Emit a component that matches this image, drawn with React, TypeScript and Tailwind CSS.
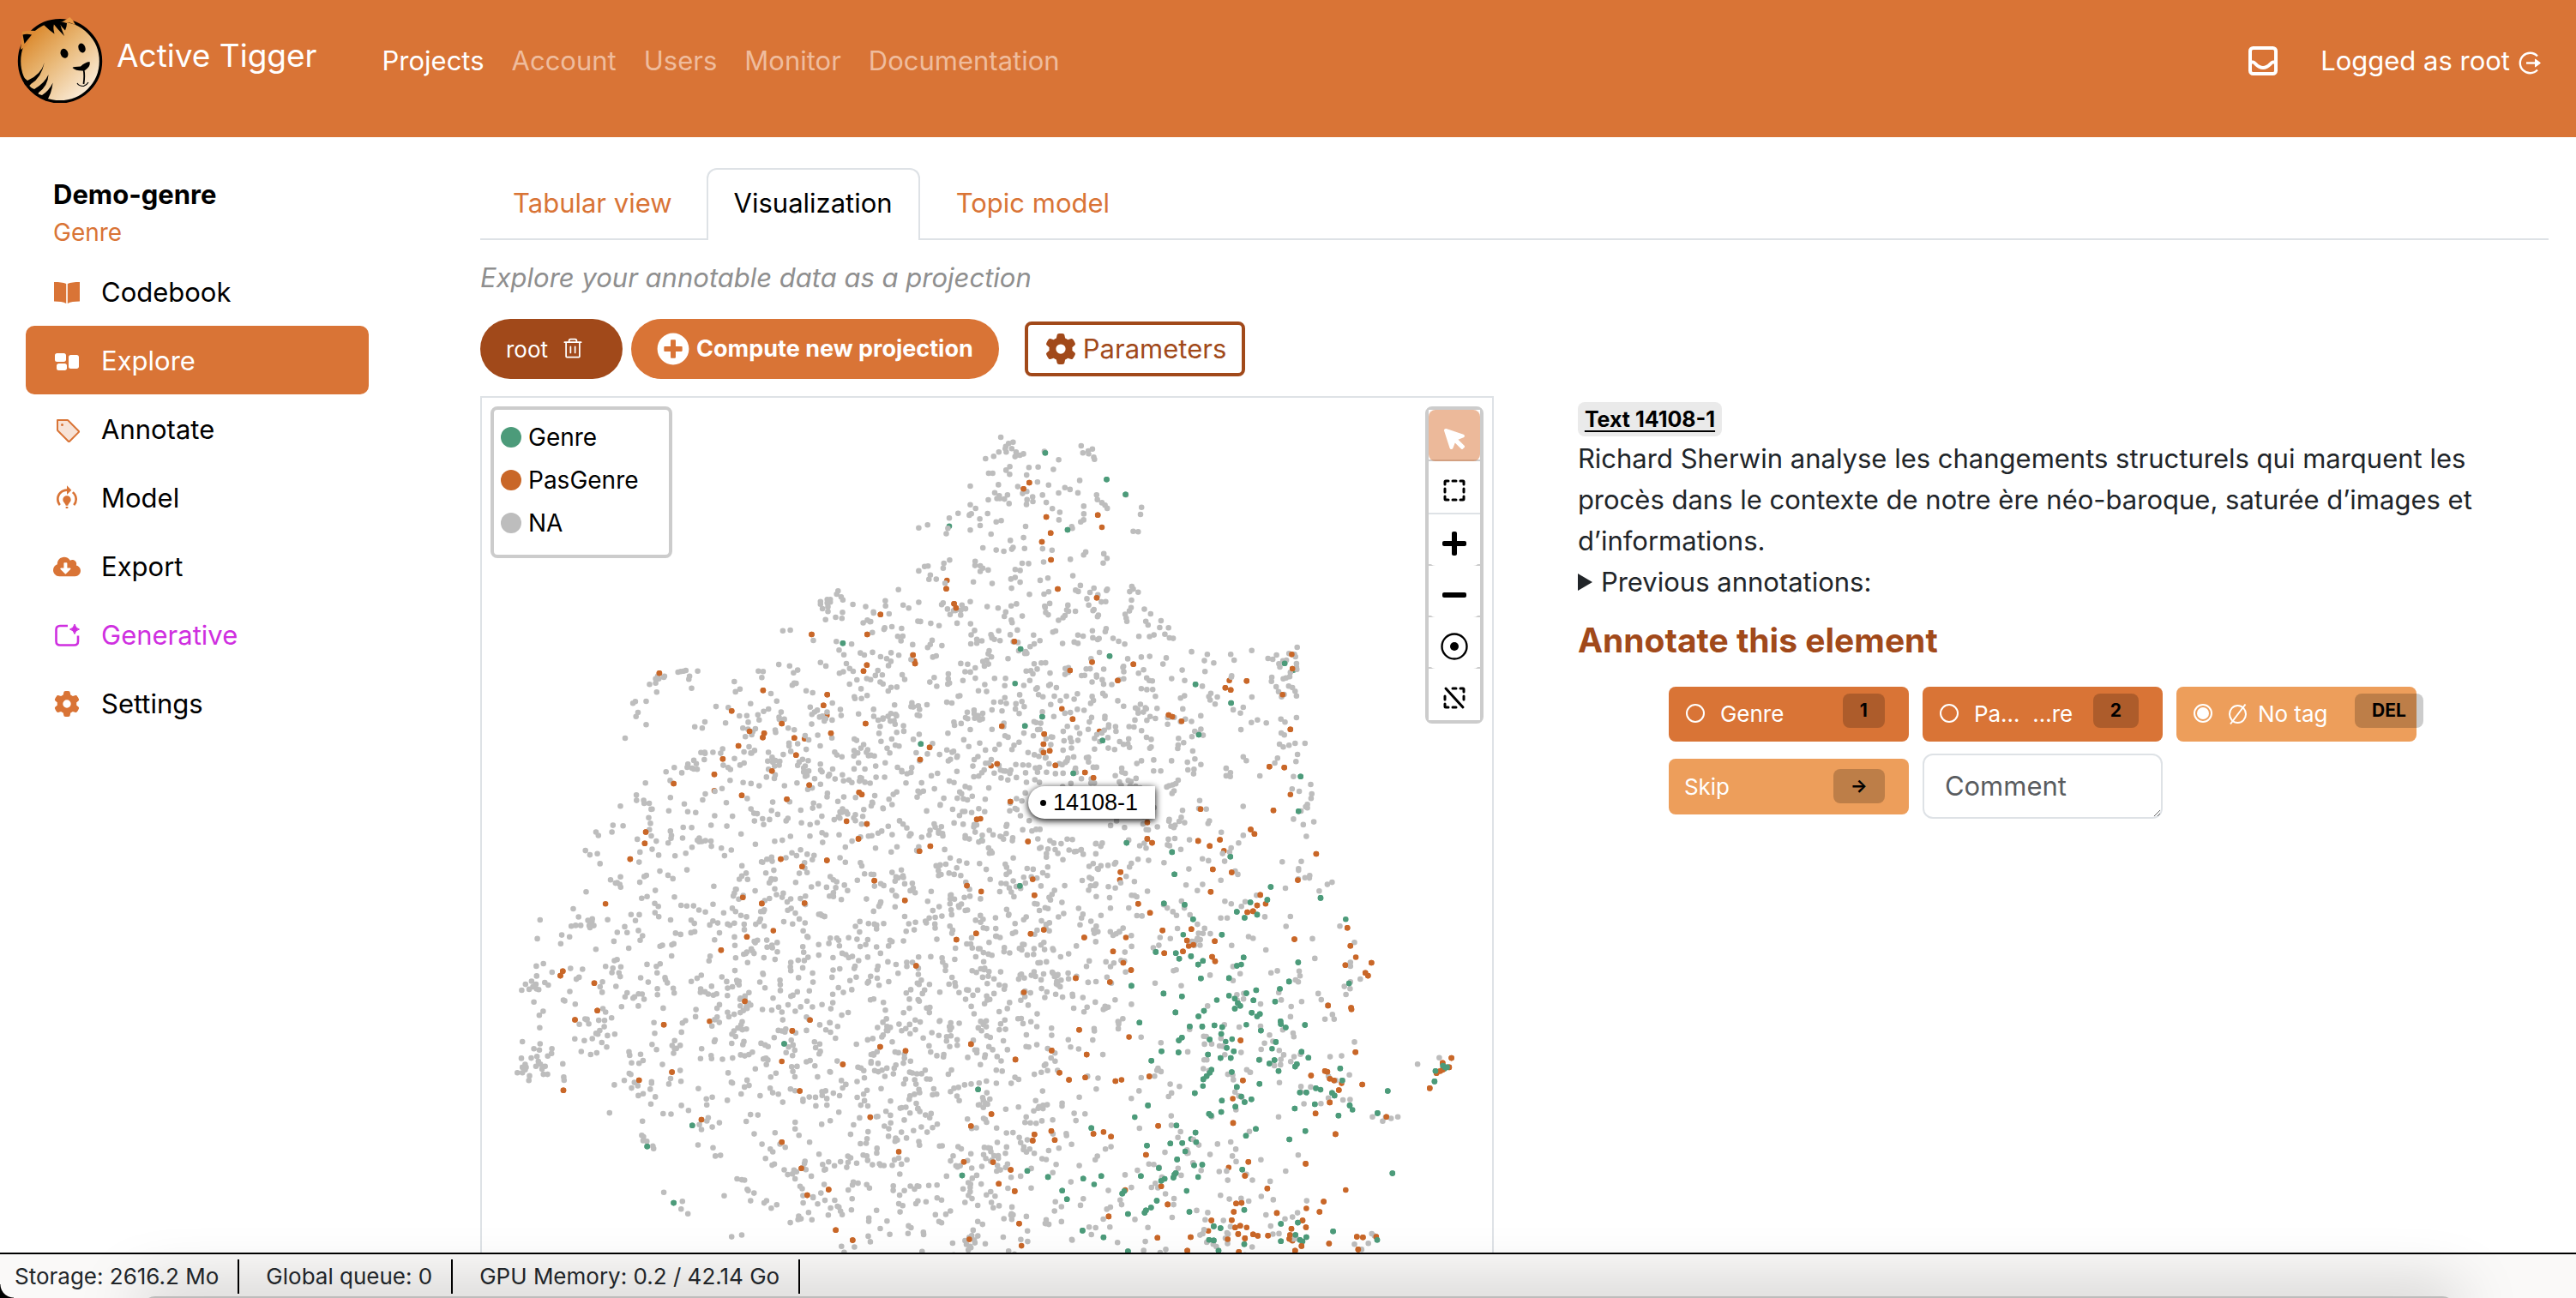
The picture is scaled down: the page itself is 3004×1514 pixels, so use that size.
import React from "react";
import { FaCloudDownloadAlt, FaMinus, FaPlus, FaPlusCircle } from "react-icons/fa";
import { FaGear } from "react-icons/fa6";
import { HiRectangleGroup } from "react-icons/hi2";
import { MdModelTraining } from "react-icons/md";
import { PiCursorFill, PiSelectionBold, PiSelectionSlashBold, PiTagDuotone, PiTrash } from "react-icons/pi";

const COLORS = { genre: "#4c9b7a", pasGenre: "#c96728", na: "#bdbdbd" };

type Point = [number, number];
type Tile = { x: number; y: number; sx: number; sy: number };

/* The projection is stored as four tiles, each with its own origin and scale. */
const TILES: Record<"nw" | "ne" | "sw" | "se", Tile> = {
  nw: { x: -22, y: -14, sx: 2.529, sy: 3 },
  ne: { x: 598, y: -14, sx: 2.529, sy: 3 },
  sw: { x: -22, y: 486, sx: 2.529, sy: 2.781 },
  se: { x: 598, y: 486, sx: 2.529, sy: 2.781 },
};

const place = (t: Tile, pts: number[]): Point[] => {
  const out: Point[] = [];
  for (let i = 0; i < pts.length; i += 2) out.push([t.x + pts[i] / t.sx, t.y + pts[i + 1] / t.sy]);
  return out;
};

const PAS_GENRE: Point[] = [
  ...place(TILES.nw, [
    1427, 681, 1425, 710, 1448, 763, 1454, 778, 1231, 800, 1028, 870, 1192, 870, 1327, 942, 1331, 963, 1333, 972,
    1191, 977, 1181, 998, 579, 1006, 885, 1066, 1074, 1081, 1063, 1118, 1073, 1153, 792, 1138, 940, 1182, 1187, 1182,
    845, 1209, 888, 1216, 884, 1231, 977, 1232, 1007, 1235, 1085, 1216, 812, 1260, 982, 1292, 766, 1306, 911, 1348,
    741, 1360, 621, 1392, 741, 1417, 1021, 1397, 822, 1433, 955, 1447, 1168, 1423, 1176, 1430, 1376, 1265, 1348, 1308,
    1557, 1330,
  ]),
  ...place(TILES.ne, [
    102, 339, 85, 361, 152, 459, 165, 515, 139, 546, 166, 609, 304, 452, 316, 495, 186, 711, 301, 742, 58, 895,
    287, 967, 409, 974, 222, 996, 363, 1031, 198, 1130, 230, 1166, 21, 1191, 146, 1219, 144, 1254, 144, 1283,
    162, 1277, 179, 1328, 309, 1209, 266, 1353, 291, 1372, 7, 1323, 46, 1455, 513, 1152, 524, 1158, 551, 1174,
    692, 1031, 743, 1033, 680, 1057, 696, 1064, 849, 1081, 872, 1202, 810, 1333, 854, 1336, 872, 1430, 822, 1486,
    607, 1481, 876, 940, 878, 990,
  ]),
  ...place(TILES.sw, [
    539, 57, 536, 94, 493, 145, 420, 290, 294, 508, 287, 523, 387, 547, 396, 636, 330, 666, 296, 895, 592, 682,
    727, 671, 616, 836, 519, 862, 703, 990, 761, 440, 837, 397, 825, 269, 881, 289, 915, 377, 937, 145, 1000, 169,
    1073, 149, 1007, 288, 831, 606, 1023, 667, 971, 702, 940, 801, 993, 897, 940, 1063, 998, 1148, 1015, 1235,
    1078, 1217, 1149, 1381, 1099, 1348, 1131, 22, 1191, 31, 1166, 79, 1213, 215, 1303, 279, 1346, 119, 1378, 103,
    1486, 231, 1528, 250, 1513, 386, 1455, 406, 1336, 491, 1230, 754, 1305, 767, 1120, 811, 1201, 982, 1285, 1094,
    1498, 745, 1558, 972, 1498, 1011, 1477, 1127, 1563, 1128, 1493, 1378, 1515, 16, 1526, 14,
  ]),
  ...place(TILES.se, [
    98, 88, 450, 26, 450, 79, 464, 92, 600, 86, 634, 102, 664, 82, 676, 118, 755, 49, 766, 63, 948, 128, 699, 188,
    643, 178, 637, 251, 371, 187, 369, 212, 112, 210, 117, 262, 423, 290, 458, 319, 495, 376, 580, 372, 567, 409,
    572, 427, 586, 423, 555, 444, 500, 450, 649, 411, 641, 462, 650, 476, 783, 261, 799, 290, 774, 295, 762, 314,
    745, 317, 894, 213, 884, 405, 1040, 368, 1049, 426, 1065, 463, 1034, 489, 1111, 481, 1093, 514, 1101, 523,
    145, 374, 106, 387, 264, 399, 387, 399, 349, 444, 379, 481, 402, 505, 239, 531, 340, 544, 86, 577, 249, 699,
    396, 722, 168, 766, 271, 779, 61, 795, 191, 838, 219, 861, 267, 853, 356, 865, 374, 861, 456, 850, 725, 733,
    983, 620, 1051, 627, 1052, 632, 1064, 771, 732, 863, 702, 922, 703, 1001, 482, 1010, 117, 1038, 112, 1058,
    167, 1027, 177, 1056, 291, 1036, 321, 1030, 343, 1045, 446, 1104, 933, 847, 974, 832, 981, 835, 988, 857,
    1001, 863, 1023, 872, 1015, 894, 1084, 876, 988, 934, 946, 970, 1005, 1037, 917, 1133, 1155, 981, 1035, 1218,
    1347, 790, 1321, 806, 1340, 820, 1303, 839, 1314, 832, 1321, 828, 1283, 888, 690, 1145, 748, 1127, 738, 1172,
    804, 1213, 47, 1153, 12, 1198, 59, 1222, 72, 1327, 79, 1399, 336, 1304, 491, 1206, 510, 1265, 480, 1373,
    578, 1371, 568, 1415, 639, 1317, 630, 1351, 687, 1378, 728, 1260, 712, 1262, 705, 1289, 699, 1316, 709, 1340,
    724, 1334, 743, 1340, 718, 1361, 738, 1375, 762, 1362, 776, 1367, 806, 1366, 720, 1419, 832, 1293, 919, 1278,
    970, 1256, 958, 1289, 908, 1317, 918, 1339, 875, 1344, 871, 1364, 869, 1377, 878, 1383, 886, 1415, 986, 1392,
    1068, 1370, 1086, 1372, 1072, 1411, 1125, 1370, 905, 1400, 385, 1218,
  ]),
];

const GENRE: Point[] = [
  ...place(TILES.nw, [1434, 491, 1120, 901, 1350, 1253]),
  ...place(TILES.ne, [
    149, 235, 330, 328, 386, 380, 215, 504, 76, 921, 339, 946, 60, 1042, 140, 1158, 89, 1190, 318, 1241, 232, 1356,
    592, 1045, 697, 1110, 602, 1221, 855, 971, 881, 995, 902, 1367, 896, 1489,
  ]),
  ...place(TILES.sw, [947, 744, 676, 1009, 543, 1077, 621, 1260, 1519, 892, 1472, 1171, 1530, 85]),
  ...place(TILES.se, [
    389, 92, 523, 122, 695, 137, 530, 194, 74, 232, 499, 289, 560, 293, 585, 340, 556, 390, 670, 390, 534, 450,
    475, 446, 544, 468, 579, 460, 614, 475, 600, 487, 734, 464, 727, 487, 714, 491, 814, 235, 804, 277, 754, 285,
    714, 316, 737, 335, 774, 325, 961, 271, 1035, 340, 895, 480, 868, 542, 841, 566, 608, 532, 691, 531, 771, 570,
    742, 580, 763, 603, 691, 588, 708, 597, 717, 612, 724, 621, 708, 630, 827, 607, 758, 643, 782, 647, 774, 655,
    742, 682, 785, 701, 843, 671, 844, 680, 858, 691, 915, 683, 403, 556, 498, 581, 552, 590, 655, 602, 533, 642,
    617, 637, 601, 655, 575, 688, 612, 688, 648, 684, 671, 690, 668, 712, 700, 729, 634, 730, 543, 733, 552, 724,
    492, 768, 542, 772, 462, 799, 629, 779, 427, 675, 681, 737, 684, 757, 705, 768, 666, 790, 696, 790, 639, 828,
    634, 838, 625, 849, 615, 859, 614, 881, 590, 904, 699, 836, 714, 884, 781, 874, 780, 796, 825, 797, 810, 808,
    837, 832, 818, 760, 829, 738, 905, 770, 925, 789, 886, 818, 891, 810, 1019, 824, 1045, 548, 947, 888, 961, 893,
    900, 902, 919, 902, 995, 903, 1002, 912, 944, 940, 885, 954, 1014, 977, 1047, 944, 1055, 958, 1129, 969,
    1159, 897, 1025, 863, 1297, 866, 1300, 832, 1322, 815, 1328, 820, 1334, 820, 1326, 825, 670, 928, 727, 915,
    737, 933, 757, 924, 710, 948, 668, 965, 632, 971, 638, 977, 413, 982, 452, 944, 536, 1009, 770, 1020, 741, 1042,
    916, 1027, 869, 1054, 285, 1017, 592, 1032, 579, 1053, 594, 1063, 553, 1066, 518, 1067, 562, 1093, 538, 1119,
    449, 1074, 588, 1138, 612, 1136, 600, 1176, 730, 1152, 484, 1147, 530, 1168, 534, 1163, 527, 1178, 501, 1182,
    491, 1188, 431, 1173, 566, 1221, 478, 1253, 461, 1275, 446, 1284, 442, 1292, 393, 1296, 574, 1289, 314, 1173,
    261, 1181, 293, 1200, 157, 1176, 96, 1156, 199, 1220, 213, 1248, 259, 1350, 321, 1372, 393, 1417, 376, 1230,
    382, 1222, 1173, 1164, 998, 1352, 894, 1324, 844, 1328, 844, 1384, 887, 1364, 919, 1371, 900, 1380, 908, 1385,
    736, 1283, 646, 1336, 666, 1342, 632, 1380, 646, 1382, 736, 1394, 660, 1415, 1128, 1380,
  ]),
];

/* Isolated texts and small clusters around the main cloud. */
const NA_OUTLIERS: Point[] = [
  ...place(TILES.nw, [
    1541, 255, 1565, 247, 1550, 306, 1562, 306, 1496, 351, 1549, 399, 1496, 416, 1460, 446, 1434, 463, 1430, 499,
    1493, 453, 1499, 448, 1524, 466, 1525, 489, 1547, 447, 1344, 497, 1370, 487, 1496, 505, 1557, 519, 1533, 567,
    1435, 610, 1418, 621, 1416, 638, 1378, 662, 1374, 677, 1284, 713, 1106, 718, 1102, 729, 1115, 739, 1120, 749,
    1054, 755, 1054, 764, 1074, 748, 1083, 748, 1074, 760, 1083, 757, 1060, 780, 1076, 773, 1076, 790, 1069, 818,
    1119, 793, 943, 857, 965, 855, 1033, 891, 1101, 895, 1109, 925, 1054, 968, 1110, 1006, 871, 998, 885, 1000,
    881, 1021, 800, 1035, 692, 998, 657, 996, 651, 998, 642, 1000, 634, 1002, 668, 1016, 666, 1027, 674, 1058,
    594, 1016, 592, 1020, 574, 1016, 568, 1025, 577, 1025, 568, 1040, 550, 1045, 571, 1072, 508, 1105, 501, 1111,
    540, 1104, 516, 1143, 510, 1157, 540, 1186, 478, 1233, 464, 1471, 538, 1390, 511, 1432, 623, 1336, 661, 1335,
    688, 1322, 971, 1048, 908, 1077, 925, 1103, 848, 1112,
  ]),
  ...place(TILES.ne, [
    18, 180, 54, 197, 41, 202, 31, 220, 50, 220, 34, 232, 63, 232, 74, 243, 255, 210, 260, 235, 276, 228, 277, 238,
    288, 221, 292, 250, 294, 257, 433, 425, 430, 450, 423, 511, 387, 382, 320, 620, 892, 915, 758, 926, 696, 940,
    627, 940, 646, 970, 620, 1000, 806, 954, 820, 957, 831, 942, 868, 937, 884, 940, 887, 948, 850, 962, 860, 960,
    838, 973, 841, 984, 890, 972, 890, 985, 891, 992, 872, 1003, 870, 1018, 859, 1022, 851, 1025, 817, 1020,
    816, 1034, 867, 1051, 878, 1056, 886, 1069, 890, 1085, 846, 1088, 733, 1125, 650, 1114, 757, 1178, 775, 1169,
    801, 1180, 844, 1166, 856, 1177, 890, 1161, 845, 1215, 854, 1222, 840, 1254, 851, 1264, 868, 1258, 886, 1251,
    915, 1251, 893, 1290, 834, 1303, 826, 1320, 733, 1298, 782, 1365, 881, 1367, 932, 1395, 935, 1428, 933, 1444,
    898, 1419, 877, 1411, 922, 1465, 917, 1473, 922, 1477, 903, 1488,
  ]),
  ...place(TILES.sw, [
    361, 117, 374, 131, 396, 127, 392, 57, 399, 68, 442, 35, 472, 37, 439, 57, 363, 251, 325, 306, 227, 342, 219, 403,
    332, 360, 347, 360, 372, 361, 381, 339, 291, 391, 314, 397, 288, 419, 216, 492, 237, 484, 173, 570, 184, 551,
    202, 541, 195, 567, 206, 559, 215, 551, 217, 566, 223, 568, 241, 545, 217, 524, 175, 737, 227, 744, 209, 760,
    225, 764, 172, 791, 201, 790, 218, 785, 183, 811, 175, 820, 186, 820, 160, 838, 175, 838, 183, 828, 196, 848,
    194, 863, 222, 801, 228, 810, 215, 817, 242, 817, 233, 826, 237, 843, 249, 843, 262, 760, 261, 775, 297, 852,
    298, 862, 294, 809, 432, 968, 529, 995, 527, 1041, 532, 1046, 531, 1058, 542, 1060, 560, 1076, 562, 1084,
    693, 1072, 744, 1108, 592, 1226, 647, 1255, 643, 1280, 663, 1295, 770, 1237, 792, 1370, 822, 1364, 808, 1182,
    822, 1185, 830, 1186, 838, 1216, 841, 1220, 858, 1228, 848, 1253, 895, 1253, 888, 1260, 909, 1277, 925, 1266,
    644, 944, 665, 960, 735, 917, 694, 889, 567, 916, 531, 906, 517, 912, 552, 891, 703, 1022, 697, 1006, 719, 994,
    723, 984, 735, 1014, 756, 1000, 965, 1324, 988, 1314, 1019, 1291, 1116, 1401,
  ]),
  ...place(TILES.se, [
    904, 152, 896, 176, 896, 181, 895, 209, 915, 205, 929, 198, 928, 206, 995, 220, 981, 227, 957, 248, 919, 71,
    941, 24, 910, 33, 881, 15, 872, 331, 859, 363, 937, 403, 1018, 362, 1061, 415, 1049, 480, 1049, 492, 944, 467,
    1078, 534, 1049, 543, 1031, 558, 1048, 565, 1036, 584, 954, 581, 963, 601, 982, 620, 996, 649, 974, 664,
    1001, 664, 1061, 738, 1023, 783, 989, 786, 1046, 845, 1311, 789, 1247, 810, 984, 849, 1006, 863, 1026, 863,
    903, 882, 932, 884, 962, 938, 984, 920, 1027, 926, 1048, 925, 1114, 981, 1144, 995, 1153, 982, 1169, 986,
    1189, 981, 837, 981, 895, 1105, 858, 1157, 785, 1120, 760, 1186, 786, 1239, 920, 1253, 800, 1299, 893, 1292,
    878, 1306, 856, 1312, 1061, 1394, 1082, 1411, 1102, 1391, 1112, 1360, 1120, 1367, 712, 1126, 635, 1103,
    657, 1069,
  ]),
];

/* Untagged texts per 60px cell of the plot, rows from top to bottom. */
const NA_DENSITY: number[][] = [
  [0, 0, 0, 0, 0, 0, 0, 0, 0, 0, 0, 0, 0, 0, 0, 0, 0, 0],
  [0, 0, 0, 0, 0, 0, 0, 0, 0, 0, 22, 9, 0, 0, 0, 0, 0, 0],
  [0, 0, 0, 0, 0, 0, 0, 0, 0, 3, 13, 10, 4, 0, 0, 0, 0, 0],
  [0, 0, 0, 0, 0, 0, 0, 0, 5, 9, 12, 12, 9, 0, 0, 0, 0, 0],
  [0, 0, 0, 0, 0, 0, 2, 18, 14, 23, 21, 21, 15, 8, 0, 0, 0, 0],
  [0, 0, 0, 0, 1, 2, 8, 21, 13, 21, 20, 23, 20, 9, 9, 3, 0, 0],
  [0, 0, 0, 0, 9, 28, 22, 22, 20, 25, 22, 24, 28, 20, 4, 0, 0, 0],
  [0, 0, 0, 10, 16, 18, 25, 25, 19, 25, 24, 24, 22, 18, 7, 1, 0, 0],
  [0, 0, 0, 17, 15, 18, 20, 17, 20, 23, 20, 19, 14, 16, 9, 0, 0, 0],
  [0, 0, 6, 15, 11, 23, 20, 18, 20, 22, 25, 18, 15, 8, 8, 3, 0, 0],
  [0, 2, 15, 12, 16, 24, 22, 22, 19, 24, 27, 18, 14, 14, 7, 2, 0, 0],
  [0, 11, 15, 16, 22, 24, 20, 17, 20, 26, 23, 22, 9, 4, 8, 10, 0, 0],
  [0, 6, 19, 15, 17, 24, 24, 19, 22, 26, 18, 11, 6, 3, 12, 16, 0, 0],
  [0, 0, 5, 9, 5, 14, 20, 22, 26, 20, 14, 9, 3, 8, 12, 3, 0, 0],
  [0, 0, 0, 0, 2, 10, 14, 21, 19, 21, 26, 10, 4, 12, 4, 0, 0, 0],
  [0, 0, 0, 0, 0, 2, 22, 12, 16, 18, 14, 6, 9, 10, 10, 2, 0, 0],
  [0, 0, 0, 0, 0, 0, 0, 10, 12, 20, 8, 8, 6, 8, 16, 16, 0, 0],
];

const CLOUD_EDGE: Point[] = [
  [590, 40], [655, 48], [672, 66], [745, 115], [768, 160], [728, 185], [762, 220], [790, 240], [808, 282],
  [860, 301], [920, 290], [955, 290], [952, 436], [965, 456], [970, 520], [980, 556], [1000, 606], [1015, 640],
  [1024, 700], [1024, 760], [1040, 800], [1060, 836], [1000, 846], [968, 886], [968, 930], [1020, 970], [1030, 1030],
  [320, 1030], [330, 900], [250, 880], [200, 835], [145, 800], [60, 790], [60, 700], [100, 610], [130, 530],
  [160, 470], [175, 440], [220, 400], [270, 360], [300, 320], [330, 290], [400, 260], [430, 200], [520, 190],
  [560, 130], [580, 70],
];

const isInside = (x: number, y: number) => {
  let inside = false;
  for (let i = 0, j = CLOUD_EDGE.length - 1; i < CLOUD_EDGE.length; j = i++) {
    const [xi, yi] = CLOUD_EDGE[i];
    const [xj, yj] = CLOUD_EDGE[j];
    if (yi > y !== yj > y && x < ((xj - xi) * (y - yi)) / (yj - yi) + xi) inside = !inside;
  }
  return inside;
};

const makeCloud = (): Point[] => {
  let seed = 14108;
  const rand = () => {
    seed = (seed * 1664525 + 1013904223) % 4294967296;
    return seed / 4294967296;
  };
  const out: Point[] = [];
  NA_DENSITY.forEach((row, r) =>
    row.forEach((cell, c) => {
      const count = Math.round(cell * 1.12);
      let last: Point | null = null;
      for (let n = 0, tries = 0; n < count && tries < count * 8; tries++) {
        const near = last && rand() < 0.15;
        const x = near && last ? last[0] + (rand() - 0.5) * 18 : c * 60 + rand() * 60;
        const y = near && last ? last[1] + (rand() - 0.5) * 18 : r * 60 + rand() * 60;
        if (!isInside(x, y)) continue;
        last = [x, y];
        out.push(last);
        n++;
      }
    })
  );
  return out;
};

const NA_POINTS = [...makeCloud(), ...NA_OUTLIERS];

const dots = (pts: Point[]) => pts.map(([x, y]) => `M${x.toFixed(1)} ${y.toFixed(1)}h0`).join("");

function Scatter() {
  return (
    <svg className="absolute top-0 left-0" width="1180" height="1200" fill="none" strokeWidth="6.6" strokeLinecap="round" role="img" aria-label="Projection">
      <path d={dots(PAS_GENRE)} stroke={COLORS.pasGenre} />
      <path d={dots(GENRE)} stroke={COLORS.genre} />
      <path d={dots(NA_POINTS)} stroke={COLORS.na} />
      <path d={dots(PAS_GENRE.filter((_, i) => i % 8 !== 0))} stroke={COLORS.pasGenre} />
      <path d={dots(GENRE.filter((_, i) => i % 9 !== 0))} stroke={COLORS.genre} />
    </svg>
  );
}

function Logo() {
  return (
    <svg width="100" height="100" viewBox="0 0 100 100" aria-hidden="true">
      <defs>
        <linearGradient id="fur" x1="0.1" y1="0.1" x2="0.85" y2="0.9">
          <stop offset="0" stopColor="#d98324" />
          <stop offset="0.45" stopColor="#e8b673" />
          <stop offset="1" stopColor="#fbeedd" />
        </linearGradient>
      </defs>
      <circle cx="50" cy="51.3" r="47.5" fill="url(#fur)" stroke="#000" strokeWidth="3.4" />
      <path d="M6 17 Q13 15 22 16 L10 34 L4 38 Z" fill="#dc8a35" />
      <path d="M6.500 20.500 Q11 19 17 20.500 L8.500 31 Z" />
      <path d="M51.500 6 Q57 3 61.500 0 Q65 3 68 9 Q60 5 51.500 6 Z" fill="#ec9a45" />
      <path d="M31 9 Q38 5 44 5 Q41 11 43.500 19.500 Q37 15 31 9 Z M40 5 L49.500 5 Q51 13 55 22 Q47 14 40 5 Z M48 4.500 L58 7 Q58 11 56 15.500 Q51 11 48 4.500 Z" />
      <ellipse cx="55" cy="42.300" rx="4.300" ry="5.600" transform="rotate(-20 55 42.300)" />
      <ellipse cx="75.500" cy="36" rx="4" ry="5.600" transform="rotate(-20 75.500 36)" />
      <path d="M64.500 59 Q66 57.500 74 57.500 Q79 52.500 84.500 52 Q85.500 56 82.500 59 Q79 63 76 62.500 Q68 62.500 64.500 59 Z" />
      <path d="M77.500 61 Q79 68 77.500 78" fill="none" stroke="#000" strokeWidth="1.800" />
      <path d="M70 77 Q72 80.500 77.500 80.500 Q81 79.500 83 76" fill="none" stroke="#000" strokeWidth="1.200" />
      <path d="M31.800 53 Q28 67 12 74 L5 68 L9 79 Q14 82 16 78 Q28 71 31.800 53 Z" />
      <path d="M36.500 67 Q32 77 20 84 L11 80 L24 92 L25 88 Q36 80 36.500 67 Z" />
      <path d="M41.600 76.500 Q37 86 29 91 L18 88 L34 98 Q40 90 41.600 76.500 Z" />
    </svg>
  );
}

function InboxIcon() {
  return (
    <svg width="34" height="34" viewBox="0 0 34 34" fill="none" stroke="currentColor" strokeWidth="4" aria-hidden="true">
      <rect x="2" y="2" width="30" height="30" rx="3.500" />
      <path d="M2 18.500h3.500c2.500 0 4.500 6.500 11.500 6.500s9-6.500 11.500-6.500H32" />
    </svg>
  );
}

function LogoutIcon() {
  return (
    <svg width="27" height="27" viewBox="0 0 27 27" fill="none" stroke="currentColor" strokeWidth="2.400" aria-hidden="true">
      <path d="M22 5.500A11.700 11.700 0 1 0 22 21.500" />
      <path d="M9 13.500h12" />
      <path d="M19.500 9l6 4.500-6 4.500Z" fill="currentColor" strokeWidth="1" />
    </svg>
  );
}

function BookIcon() {
  return (
    <svg width="32" height="32" viewBox="0 0 32 32" fill="currentColor" aria-hidden="true">
      <path d="M1 4c6 0 11 .4 14.200 2v23C12 27.200 7 26.500 1 26.500ZM31 4c-6 0-11 .4-14.200 2v23c3.200-1.800 8.200-2.500 14.200-2.500Z" />
    </svg>
  );
}

function GenerateIcon() {
  return (
    <svg width="32" height="32" viewBox="0 0 32 32" fill="none" stroke="currentColor" strokeWidth="2.600" aria-hidden="true">
      <path d="M17 5H8Q3.500 5 3.500 9.500V23Q3.500 27.500 8 27.500H24.500Q29 27.500 29 23V16.500" />
      <path d="M25 3q1 5 5.500 6-4.500 1-5.500 5.500-1-4.500-5.500-5.500 4.500-1 5.500-6Z" fill="currentColor" strokeWidth="1" />
    </svg>
  );
}

function TargetIcon() {
  return (
    <svg width="32" height="32" viewBox="0 0 32 32" aria-hidden="true">
      <circle cx="16" cy="16" r="14.500" fill="none" stroke="currentColor" strokeWidth="2.400" />
      <circle cx="16" cy="16" r="5" fill="currentColor" />
    </svg>
  );
}

function EmptySetIcon() {
  return (
    <svg width="23" height="26" viewBox="0 0 23 26" fill="none" stroke="currentColor" strokeWidth="2" aria-hidden="true">
      <ellipse cx="11.500" cy="13" rx="9.500" ry="10" />
      <path d="M3 24.500 20.500 1.500" />
    </svg>
  );
}

const NAV = ["Projects", "Account", "Users", "Monitor", "Documentation"];

const MENU: { label: string; icon: React.ReactNode; kind?: "active" | "generative" }[] = [
  { label: "Codebook", icon: <BookIcon /> },
  { label: "Explore", icon: <HiRectangleGroup />, kind: "active" },
  { label: "Annotate", icon: <PiTagDuotone /> },
  { label: "Model", icon: <MdModelTraining /> },
  { label: "Export", icon: <FaCloudDownloadAlt /> },
  { label: "Generative", icon: <GenerateIcon />, kind: "generative" },
  { label: "Settings", icon: <FaGear className="p-px" /> },
];

const LEGEND = [
  { label: "Genre", dot: "bg-[#4c9b7a]" },
  { label: "PasGenre", dot: "bg-[#c96728]" },
  { label: "NA", dot: "bg-[#bdbdbd]" },
];

const TOOLS = [
  { label: "Select", icon: <PiCursorFill className="size-8" />, row: "h-[60px]", button: "rounded-lg bg-[#d97436]/50 text-white" },
  { label: "Marquee", icon: <PiSelectionBold className="size-8" />, row: "h-[62px]", button: "border-b-2 border-[#dee2e6] bg-white" },
  { label: "Zoom in", icon: <FaPlus className="size-8" />, row: "h-[60px]", button: "rounded-b-lg bg-white" },
  { label: "Zoom out", icon: <FaMinus className="size-8" />, row: "h-[60px]", button: "rounded-b-lg bg-white" },
  { label: "Reset view", icon: <TargetIcon />, row: "h-[60px]", button: "rounded-b-lg bg-white" },
  { label: "Clear selection", icon: <PiSelectionSlashBold className="size-8" />, row: "h-[60px]", button: "bg-white" },
];

function Header() {
  return (
    <header className="flex h-40 shrink-0 items-start bg-[#d97436] pt-5 pr-10 pl-5 text-white">
      <a href="#home" className="flex items-start">
        <Logo />
        <span className="ml-4 pt-[15px] text-[37px] leading-[60px]">Active Tigger</span>
      </a>
      <nav className="ml-[76px] flex gap-8 pt-[27px] text-[31px] leading-[48px]">
        {NAV.map((item, i) => (
          <a key={item} href={`#${item.toLowerCase()}`} className={i === 0 ? "" : "text-[#efbc9d]"}>
            {item}
          </a>
        ))}
      </nav>
      <div className="ml-auto flex items-center pt-[27px] text-[31px] leading-[48px]">
        <button type="button" aria-label="Inbox" className="mr-[50px]">
          <InboxIcon />
        </button>
        <span>Logged as root</span>
        <button type="button" aria-label="Log out" className="mt-1 ml-2.5">
          <LogoutIcon />
        </button>
      </div>
    </header>
  );
}

function Sidebar() {
  return (
    <aside className="w-[560px] shrink-0 pt-11 pr-[130px] pl-[30px]">
      <div className="pl-8 text-[31px] leading-[46px] font-bold text-black">Demo-genre</div>
      <a href="#genre" className="block pl-8 text-[28px] leading-[42px] text-[#d97436]">Genre</a>
      <ul className="mt-2">
        {MENU.map(({ label, icon, kind }) => (
          <li key={label}>
            <a
              href={`#${label.toLowerCase()}`}
              className={
                "flex h-20 items-center rounded-[10px] pt-0.5 pl-8 text-[31px] " +
                (kind === "active" ? "bg-[#d97436] text-white" : kind === "generative" ? "text-[#cf2fe0]" : "text-black")
              }
            >
              <span className={"w-14 text-[32px] " + (kind ? "" : "text-[#d97436]")}>{icon}</span>
              {label}
            </a>
          </li>
        ))}
      </ul>
    </aside>
  );
}

function Tabs() {
  return (
    <div role="tablist" className="flex gap-2 border-b-2 border-[#dee2e6] pl-1.5 text-[31px] leading-[48px]">
      <button type="button" role="tab" className="px-8 py-[17px] text-[#d97436]">Tabular view</button>
      <button type="button" role="tab" aria-selected="true" className="-mb-0.5 rounded-t-xl border-2 border-b-0 border-[#dee2e6] bg-white px-[30px] pt-[15px] pb-[19px] text-black">
        Visualization
      </button>
      <button type="button" role="tab" className="px-[34px] py-[17px] text-[#d97436]">Topic model</button>
    </div>
  );
}

function Plot() {
  return (
    <section className="relative min-h-0 overflow-hidden border-2 border-b-0 border-[#dee2e6] text-black">
      <Scatter />
      <ul className="absolute top-2.5 left-2.5 w-[212px] rounded-lg border-4 border-[#ccc] bg-white px-2 pt-[7px] pb-3 text-[28px] leading-[50px]">
        {LEGEND.map(({ label, dot }) => (
          <li key={label} className="flex items-center gap-2">
            <span className={"size-6 rounded-full " + dot} />
            {label}
          </li>
        ))}
      </ul>
      <ul className="absolute top-2.5 right-2.5 w-[68px] rounded-lg border-4 border-[#ccc] bg-white">
        {TOOLS.map(({ label, icon, row, button }) => (
          <li key={label} className={"bg-[linear-gradient(to_top,#ccc_2px,white_2px)] " + row}>
            <button type="button" aria-label={label} className={"flex size-full items-center justify-center pt-2 " + button}>
              {icon}
            </button>
          </li>
        ))}
      </ul>
      <div className="absolute top-[453px] left-[637px] flex h-[38px] items-center gap-2 rounded-l-full bg-white pr-5 pl-3.5 font-['Liberation_Sans',sans-serif] text-[27px] shadow-[0_2px_8px_#000]">
        <span className="size-[7px] rounded-full bg-black" />
        14108-1
      </div>
    </section>
  );
}

function Key({ children }: { children: React.ReactNode }) {
  return (
    <kbd className="ml-auto flex h-10 shrink-0 items-center rounded-lg bg-black/20 px-5 font-[Inter,sans-serif] text-[21px] font-bold text-black">
      {children}
    </kbd>
  );
}

function TagOption({ label, hotkey, checked = false, wide = false }: { label: React.ReactNode; hotkey: string; checked?: boolean; wide?: boolean }) {
  return (
    <label className={"flex h-16 w-[280px] rounded-lg pt-2 pl-5 " + (checked ? "bg-[#ed9e5b]" : "bg-[#d97436]") + (wide ? "" : " pr-7")}>
      <input
        type="radio"
        name="tag"
        defaultChecked={checked}
        className="mt-3 mr-[18px] size-[22px] shrink-0 appearance-none rounded-full border-2 border-white bg-clip-content p-0.5 checked:bg-white"
      />
      <span className="flex items-center gap-3 self-start pt-1 text-[26px] leading-[40px] whitespace-nowrap">{label}</span>
      {wide ? <span className="-mr-2 ml-auto"><Key>{hotkey}</Key></span> : <Key>{hotkey}</Key>}
    </label>
  );
}

function AnnotationPanel() {
  return (
    <section className="min-w-0 pt-[7px] pr-12 text-[#212529]">
      <span className="inline-block rounded-lg bg-[#eaeaea] px-2 text-[25px] leading-10 font-bold text-black underline decoration-2 underline-offset-4">
        Text 14108-1
      </span>
      <p className="mt-0.5 text-[31px] leading-[48px]">
        Richard Sherwin analyse les changements structurels qui marquent les procès dans le contexte de notre ère
        néo-baroque, saturée d’images et d’informations.
      </p>
      <details className="text-[31px] leading-[48px]">
        <summary className="flex list-none items-center gap-2.5">
          <span className="border-y-[10px] border-l-[17px] border-y-transparent border-l-[#212529]" />
          Previous annotations:
        </summary>
      </details>
      <h2 className="mt-5 text-[39px] leading-[48px] font-bold text-[#a1491a]">Annotate this element</h2>
      <form className="mt-[30px] flex flex-wrap items-center gap-x-4 gap-y-3.5 px-[106px] text-white">
        <TagOption label="Genre" hotkey="1" />
        <TagOption label={<span>Pa…&nbsp; …re</span>} hotkey="2" />
        <TagOption label={<><EmptySetIcon />No tag</>} hotkey="DEL" checked wide />
        <button type="button" className="flex h-[65px] w-[280px] items-center rounded-lg bg-[#ed9e5b] pr-7 pl-[18px] text-[26px]">
          Skip <Key>→</Key>
        </button>
        <textarea
          aria-label="Comment"
          placeholder="Comment"
          rows={1}
          className="block h-[76px] w-[280px] rounded-xl border-2 border-[#dee2e6] bg-white px-6 py-3 text-[31px] leading-[48px] placeholder:text-[#595c5f]"
        />
      </form>
    </section>
  );
}

function StatusBar() {
  return (
    <footer className="relative flex h-[53px] shrink-0 items-center border-t-2 border-black bg-[#faf9f8] text-[26px] text-[#212529]">
      <div className="pointer-events-none absolute right-[140px] -bottom-5 left-[165px] h-[22px] rounded-t-2xl bg-[#bdbcbb] shadow-[0_0_70px_6px_rgba(0,0,0,0.25)]" />
      <div className="pointer-events-none absolute bottom-0 left-0 size-4 bg-[radial-gradient(circle_at_top_right,transparent_15px,black_16px)]" />
      {["Storage: 2616.2 Mo", "Global queue: 0", "GPU Memory: 0.2 / 42.14 Go"].map((text, i) => (
        <span key={text} className={"relative h-10 border-r-2 border-black pr-[22px] leading-10 " + (i === 0 ? "pl-[17px]" : "pl-[31px]")}>
          {text}
        </span>
      ))}
    </footer>
  );
}

export default function App() {
  return (
    <div className="flex h-screen flex-col overflow-hidden bg-white font-[Inter,sans-serif]">
      <Header />
      <div className="flex min-h-0 flex-1 overflow-hidden">
        <Sidebar />
        <main className="flex min-w-0 flex-1 flex-col pt-9 pr-8">
          <Tabs />
          <p className="mt-5 text-[31px] leading-[48px] text-[#8f8f8f] italic">Explore your annotable data as a projection</p>
          <div className="mt-6 flex h-[70px] items-center">
            <button type="button" className="flex h-[70px] items-center gap-[15px] rounded-full bg-[#a1491a] pr-11 pl-[30px] text-[26px] text-white">
              root
              <PiTrash className="size-7" />
            </button>
            <button type="button" className="ml-2.5 flex h-[70px] items-center gap-2 rounded-full bg-[#d97436] px-[30px] text-[27px] font-bold text-white">
              <FaPlusCircle className="size-[38px]" />
              Compute new projection
            </button>
            <button type="button" className="ml-[30px] flex h-16 items-center gap-2 rounded-lg border-4 border-[#a1491a] pr-[18px] pl-5 text-[31px] text-[#a1491a]">
              <FaGear className="size-9" />
              Parameters
            </button>
          </div>
          <div className="mt-5 grid min-h-0 flex-1 grid-cols-[49%_1fr] gap-x-[98px]">
            <Plot />
            <AnnotationPanel />
          </div>
        </main>
      </div>
      <StatusBar />
    </div>
  );
}
